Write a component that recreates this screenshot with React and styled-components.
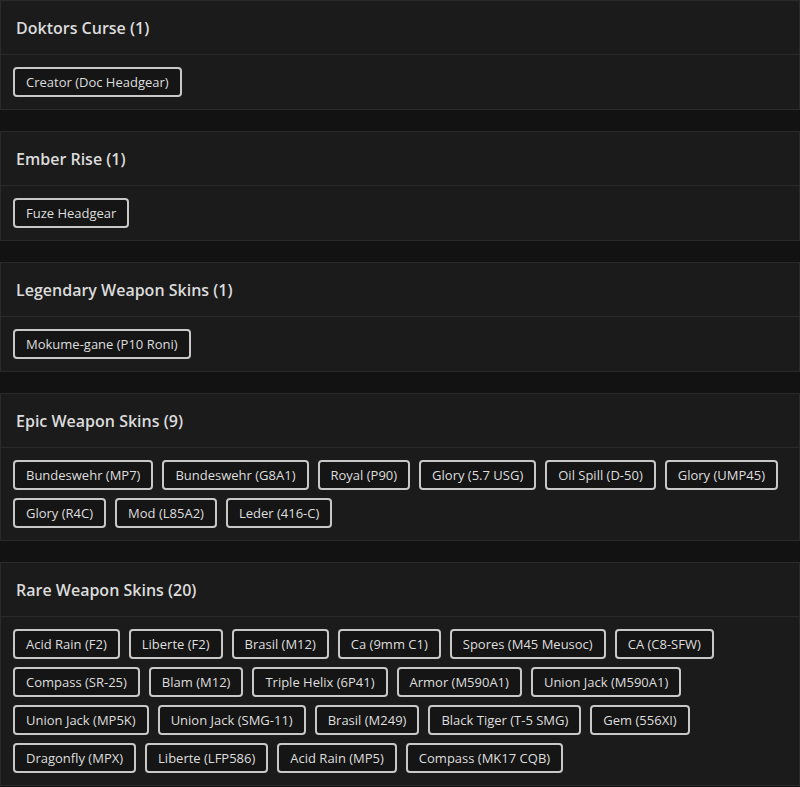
import React from "react";
import styled, { createGlobalStyle } from "styled-components";

const GlobalStyle = createGlobalStyle`
  body {
    margin: 0;
    background: #121212;
    font-family: "Open Sans", "Liberation Sans", sans-serif;
  }
`;

const sections = [
  { title: "Doktors Curse", items: ["Creator (Doc Headgear)"] },
  { title: "Ember Rise", items: ["Fuze Headgear"] },
  { title: "Legendary Weapon Skins", items: ["Mokume-gane (P10 Roni)"] },
  {
    title: "Epic Weapon Skins",
    items: [
      "Bundeswehr (MP7)",
      "Bundeswehr (G8A1)",
      "Royal (P90)",
      "Glory (5.7 USG)",
      "Oil Spill (D-50)",
      "Glory (UMP45)",
      "Glory (R4C)",
      "Mod (L85A2)",
      "Leder (416-C)",
    ],
  },
  {
    title: "Rare Weapon Skins",
    items: [
      "Acid Rain (F2)",
      "Liberte (F2)",
      "Brasil (M12)",
      "Ca (9mm C1)",
      "Spores (M45 Meusoc)",
      "CA (C8-SFW)",
      "Compass (SR-25)",
      "Blam (M12)",
      "Triple Helix (6P41)",
      "Armor (M590A1)",
      "Union Jack (M590A1)",
      "Union Jack (MP5K)",
      "Union Jack (SMG-11)",
      "Brasil (M249)",
      "Black Tiger (T-5 SMG)",
      "Gem (556XI)",
      "Dragonfly (MPX)",
      "Liberte (LFP586)",
      "Acid Rain (MP5)",
      "Compass (MK17 CQB)",
    ],
  },
];

function App() {
  return (
    <Page>
      <GlobalStyle />
      {sections.map((s) => (
        <Card key={s.title}>
          <CardHeader>
            {s.title} ({s.items.length})
          </CardHeader>
          <CardBody>
            {s.items.map((item) => (
              <Chip key={item}>{item}</Chip>
            ))}
          </CardBody>
        </Card>
      ))}
    </Page>
  );
}

export default App;

const Page = styled.div`
  display: flex;
  flex-direction: column;
  gap: 21px;
`;

const Card = styled.section`
  background-color: #1b1b1b;
  border: 1px solid #2a2a2a;
`;

const CardHeader = styled.h2`
  margin: 0;
  height: 53px;
  display: flex;
  align-items: center;
  padding: 0 15px;
  border-bottom: 1px solid #2a2a2a;
  font-size: 16px;
  font-weight: 600;
  color: #dcdcdc;
`;

const CardBody = styled.div`
  display: flex;
  flex-wrap: wrap;
  gap: 8px 9px;
  padding: 12px 12px;
`;

const Chip = styled.span`
  display: inline-flex;
  align-items: center;
  height: 30px;
  box-sizing: border-box;
  padding: 0 11px;
  border: 2px solid #c8c8c8;
  border-radius: 4px;
  background-color: #151515;
  color: #dedede;
  font-size: 13px;
`;
